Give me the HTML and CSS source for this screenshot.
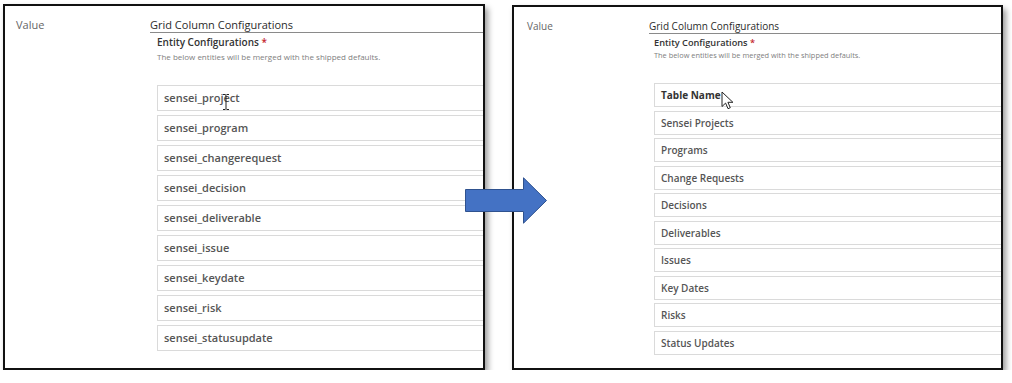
FILE: index.html
```html
<!DOCTYPE html>
<html lang="en">
<head>
  <meta charset="UTF-8" />
  <meta name="viewport" content="width=device-width, initial-scale=1.0"/>
  <title>Grid Column Configurations - before and after</title>
  <link rel="stylesheet" href="styles.css">
</head>
<body>
  <main class="compare">

    <!-- Before: raw entity logical names -->
    <section class="panel panel-before">
      <div class="field-label">Value</div>
      <div class="field">
        <div class="field-title">Grid Column Configurations</div>
        <div class="entity">
          <div class="entity-title">Entity Configurations <span class="req">*</span></div>
          <div class="entity-desc">The below entities will be merged with the shipped defaults.</div>
          <ul class="entity-list">
            <li class="entity-row">sensei_project
              <svg class="cursor cursor-ibeam" width="8" height="16" viewBox="0 0 8 16">
                <path d="M1 0.5h2.2l0.8 0.8 0.8-0.8H7M4 1.3v13.4M1 15.5h2.2l0.8-0.8 0.8 0.8H7" fill="none" stroke="#222" stroke-width="1"/>
              </svg>
            </li>
            <li class="entity-row">sensei_program</li>
            <li class="entity-row">sensei_changerequest</li>
            <li class="entity-row">sensei_decision</li>
            <li class="entity-row">sensei_deliverable</li>
            <li class="entity-row">sensei_issue</li>
            <li class="entity-row">sensei_keydate</li>
            <li class="entity-row">sensei_risk</li>
            <li class="entity-row">sensei_statusupdate</li>
          </ul>
        </div>
      </div>
    </section>

    <!-- After: display names in a table -->
    <section class="panel panel-after">
      <div class="field-label">Value</div>
      <div class="field">
        <div class="field-title">Grid Column Configurations</div>
        <div class="entity">
          <div class="entity-title">Entity Configurations <span class="req">*</span></div>
          <div class="entity-desc">The below entities will be merged with the shipped defaults.</div>
          <ul class="entity-list">
            <li class="entity-row entity-head">Table Name
              <svg class="cursor cursor-pointer" width="13" height="19" viewBox="0 0 13 19">
                <path d="M1 1v14.5l3.6-3.4 2.4 5.6 2.3-1-2.4-5.4h5z" fill="#fff" stroke="#222" stroke-width="1" stroke-linejoin="round"/>
              </svg>
            </li>
            <li class="entity-row">Sensei Projects</li>
            <li class="entity-row">Programs</li>
            <li class="entity-row">Change Requests</li>
            <li class="entity-row">Decisions</li>
            <li class="entity-row">Deliverables</li>
            <li class="entity-row">Issues</li>
            <li class="entity-row">Key Dates</li>
            <li class="entity-row">Risks</li>
            <li class="entity-row">Status Updates</li>
          </ul>
        </div>
      </div>
    </section>

    <svg class="arrow" width="84" height="48" viewBox="0 0 84 48">
      <path d="M0.5 12.5H58.5V0.8L81.5 23.5 58.5 46.2V34.5H0.5Z" fill="#4472c4" stroke="#2f528f" stroke-width="1"/>
    </svg>
  </main>
</body>
</html>
```

FILE: styles.css
```css
body {
  margin: 0;
  padding: 0;
  background: #fff;
  font-family: 'Open Sans', 'Noto Sans', sans-serif;
  color: #333;
}

.compare {
  position: relative;
  display: flex;
  align-items: flex-start;
  gap: 27px;
  padding: 4px 0 0 3px;
}

.panel {
  box-sizing: border-box;
  display: grid;
  border: 2px solid #111;
  background: #fff;
  overflow: hidden;
  box-shadow: 3px 4px 6px rgba(0,0,0,0.4);
}

.panel-before {
  width: 482px;
  height: 366px;
  grid-template-columns: 145px 1fr;
  padding-top: 11px;
}

.panel-after {
  width: 491px;
  height: 365px;
  margin-top: 1px;
  grid-template-columns: 135px 1fr;
  padding-top: 12px;
}

.field-label {
  color: #666;
  font-size: 11px;
  line-height: 15px;
  padding-left: 11px;
}

.field-title {
  font-size: 11px;
  line-height: 15px;
  color: #2b2b2b;
  border-bottom: 1px solid #8a8a8a;
}

.entity {
  padding-left: 7px;
}

.entity-title {
  margin-top: 3px;
  font-size: 10px;
  font-weight: 600;
  line-height: 13px;
  color: #333;
}

.req {
  color: #c4262e;
}

.entity-desc {
  margin-top: 2px;
  font-size: 8px;
  line-height: 11px;
  color: #808080;
}

.entity-list {
  list-style: none;
  margin: 23px 0 0;
  padding: 0;
  display: flex;
  flex-direction: column;
  gap: 4px;
}

.entity-row {
  position: relative;
  box-sizing: border-box;
  height: 26px;
  padding-left: 6px;
  border: 1px solid #dadada;
  border-right: none;
  font-size: 11px;
  font-weight: 600;
  line-height: 24px;
  color: #555;
}

/* the after screenshot was taken a little smaller */
.panel-after .field-label {
  font-size: 10px;
  line-height: 14px;
  padding-left: 13px;
}

.panel-after .field-title {
  font-size: 10px;
  line-height: 14px;
}

.panel-after .entity {
  padding-left: 5px;
}

.panel-after .entity-title {
  margin-top: 3px;
  font-size: 9.2px;
  line-height: 12px;
}

.panel-after .entity-desc {
  margin-top: 1px;
  font-size: 7.4px;
  line-height: 10px;
}

.panel-after .entity-list {
  margin-top: 23px;
  gap: 3.55px;
}

.panel-after .entity-row {
  height: 24px;
  font-size: 10px;
  line-height: 22px;
}

.entity-head {
  font-weight: 700;
  color: #333 !important;
}

.cursor {
  position: absolute;
  pointer-events: none;
}

.cursor-ibeam {
  left: 64px;
  top: 8px;
}

.cursor-pointer {
  left: 66px;
  top: 7px;
}

.arrow {
  position: absolute;
  left: 465px;
  top: 177px;
}
```
